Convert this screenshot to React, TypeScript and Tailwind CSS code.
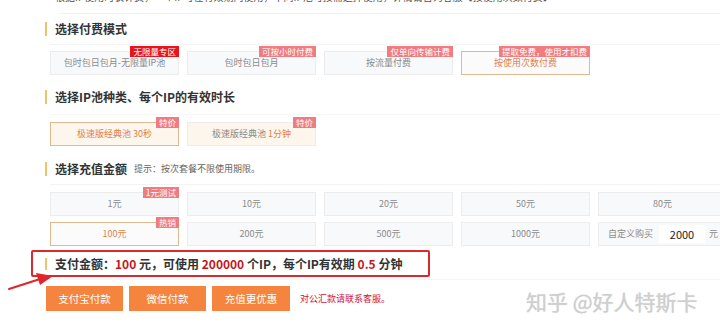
import React from "react";

const font = { fontFamily: '"Noto Sans CJK SC", "Noto Sans", sans-serif' };

function Badge({ text, red }: { text: string; red?: boolean }) {
  return (
    <span
      className={`absolute -top-[6px] -right-[1px] h-[11px] px-[3px] text-[8.5px] leading-[11px] text-white ${
        red ? "bg-[#e8141c]" : "bg-[#f07b80]"
      }`}
    >
      {text}
    </span>
  );
}

function Card({
  children,
  badge,
  redBadge,
  selected,
  cream,
}: {
  children: React.ReactNode;
  badge?: string;
  redBadge?: boolean;
  selected?: boolean;
  cream?: boolean;
}) {
  return (
    <div
      className={`relative flex h-[24px] items-center justify-center border text-[9px] ${
        selected
          ? "border-[#e2b88e] text-[#e0824a]"
          : "border-[#ececec] text-[#8a8a8a]"
      } ${cream ? "bg-[#fdf6ec]" : selected ? "bg-[#fbfbfc]" : "bg-[#f8f9fb]"}`}
    >
      {children}
      {badge && <Badge text={badge} red={redBadge} />}
    </div>
  );
}

function Title({ children }: { children: React.ReactNode }) {
  return (
    <div className="flex h-[14px] items-center border-l-2 border-[#e9c46a] pl-[8px]">
      {children}
    </div>
  );
}

export default function App() {
  return (
    <div
      className="relative h-[332px] w-[720px] overflow-hidden bg-white"
      style={font}
    >
      {/* clipped top text */}
      <div className="h-[3px] overflow-hidden pl-[55px]">
        <div className="-mt-[11px] whitespace-nowrap text-[10px] leading-[15px] text-[#555]">
          根据IP使用时长计费，一个IP可在有效期内使用，不同IP池可按需选择使用，详情请咨询客服【按使用次数付费】
        </div>
      </div>
      <div className="ml-[60px] mt-[10px] border-t border-[#f0f0f0]" />

      {/* Section 1 */}
      <div className="ml-[45px] mt-[8px]">
        <Title>
          <span className="text-[12px] font-bold text-[#333]">选择付费模式</span>
        </Title>
      </div>
      <div className="ml-[50px] mt-[8px] border-t border-[#f3f3f3]" />
      <div className="ml-[50px] mt-[6px] grid grid-cols-[repeat(5,129px)] gap-x-[8px]">
        <Card badge="无限量专区" redBadge>
          包时包日包月-无限量IP池
        </Card>
        <Card badge="可按小时付费">包时包日包月</Card>
        <Card badge="仅单向传输计费">按流量付费</Card>
        <Card badge="提取免费，使用才扣费" selected>
          按使用次数付费
        </Card>
      </div>

      {/* Section 2 */}
      <div className="ml-[45px] mt-[15px]">
        <Title>
          <span className="text-[12px] font-bold text-[#333]">
            选择IP池种类、每个IP的有效时长
          </span>
        </Title>
      </div>
      <div className="ml-[50px] mt-[10px] border-t border-[#f6f6f6]" />
      <div className="ml-[50px] mt-[7px] grid grid-cols-[repeat(5,129px)] gap-x-[8px]">
        <Card badge="特价" selected cream>
          极速版经典池 30秒
        </Card>
        <Card badge="特价" cream>
          极速版经典池&nbsp;<span className="text-[#e0824a]">1分钟</span>
        </Card>
      </div>

      {/* Section 3 */}
      <div className="ml-[45px] mt-[16px]">
        <Title>
          <span className="text-[12px] font-bold text-[#333]">选择充值金额</span>
          <span className="ml-[7px] text-[9px] text-[#666]">
            提示：按次套餐不限使用期限。
          </span>
        </Title>
      </div>
      <div className="ml-[50px] mt-[8px] border-t border-[#f3f3f3]" />
      <div className="ml-[50px] mt-[7px] grid grid-cols-[repeat(5,129px)] gap-x-[8px] gap-y-[6px]">
        <Card badge="1元测试">1元</Card>
        <Card>10元</Card>
        <Card>20元</Card>
        <Card>50元</Card>
        <Card>80元</Card>
        <Card badge="热销" selected>
          100元
        </Card>
        <Card>200元</Card>
        <Card>500元</Card>
        <Card>1000元</Card>
        <div className="flex h-[24px] items-center border border-[#ececec] bg-[#f8f9fb] pl-[9px] text-[9px] text-[#8a8a8a]">
          自定义购买
          <span className="ml-[6px] flex h-[18px] w-[46px] items-center justify-center bg-white text-[11px] text-[#222]">
            2000
          </span>
          <span className="ml-[4px]">元</span>
        </div>
      </div>

      {/* Pay summary */}
      <div className="ml-[31px] mt-[4px] flex h-[27px] w-[399px] items-center rounded-[2px] border-2 border-[#d92b2b] pl-[12px]">
        <div className="flex h-[12px] items-center whitespace-nowrap border-l-2 border-[#e9c46a] pl-[8px] text-[12px] font-bold text-[#333]">
          支付金额：<span className="text-[#c8161d]">100</span>&nbsp;元，可使用&nbsp;
          <span className="text-[#c8161d]">200000</span>&nbsp;个IP，每个IP有效期&nbsp;
          <span className="text-[#c8161d]">0.5</span>&nbsp;分钟
        </div>
      </div>
      <div className="ml-[45px] mt-[2px] border-t border-[#f6f6f6]" />

      {/* Buttons */}
      <div className="ml-[46px] mt-[6px] flex items-center gap-[6px]">
        <button className="h-[25px] w-[77px] bg-[#f5843e] text-[10.5px] text-white">
          支付宝付款
        </button>
        <button className="h-[25px] w-[77px] bg-[#f5843e] text-[10.5px] text-white">
          微信付款
        </button>
        <button className="h-[25px] w-[78px] bg-[#f5843e] text-[10.5px] text-white">
          充值更优惠
        </button>
        <span className="ml-[4px] text-[9px] text-[#d0103a]">对公汇款请联系客服。</span>
      </div>

      {/* arrow */}
      <svg
        className="absolute left-0 top-[268px]"
        width="60"
        height="30"
        viewBox="0 0 60 30"
      >
        <path d="M9 21 L40 11" stroke="#e0262a" strokeWidth="2" strokeLinecap="round" />
        <path d="M36 5 L53 8 L40 17 Z" fill="#e0262a" />
      </svg>

      {/* watermark */}
      <div
        className="absolute left-[526px] top-[286px] whitespace-nowrap text-[21px] text-[#cfcfcf]"
        style={{ textShadow: "0 0 1px rgba(120,120,120,0.35)" }}
      >
        知乎 @好人特斯卡
      </div>
    </div>
  );
}
